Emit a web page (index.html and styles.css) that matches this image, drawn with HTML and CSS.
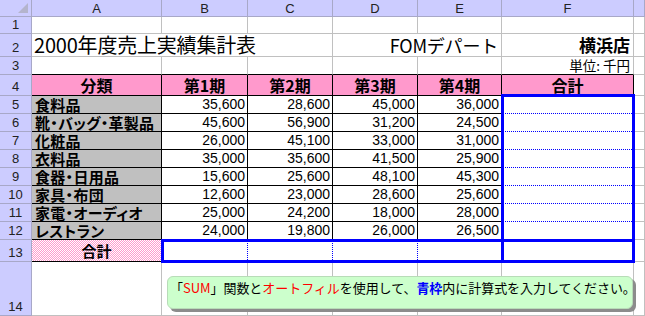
FILE: index.html
```html
<!DOCTYPE html>
<html lang="ja">
<head>
<meta charset="utf-8">
<title>2000年度売上実績集計表</title>
<link rel="stylesheet" href="styles.css">
</head>
<body>
<div class="stack">
  <div class="sheet">
    <!-- column headers -->
    <div class="c corner"><svg class="tri" width="10" height="10" viewBox="0 0 10 10"><polygon points="10,0 10,10 0,10" fill="#b4b4cc"/></svg></div>
    <div class="c ch">A</div><div class="c ch">B</div><div class="c ch">C</div><div class="c ch">D</div><div class="c ch">E</div><div class="c ch">F</div><div class="c ch"></div>

    <!-- row 1 -->
    <div class="c rh">1</div><div class="c"></div><div class="c"></div><div class="c"></div><div class="c"></div><div class="c"></div><div class="c"></div><div class="c"></div>

    <!-- row 2 -->
    <div class="c rh">2</div>
    <div class="c title span3">2000年度売上実績集計表</div>
    <div class="c store span2">FOMデパート</div>
    <div class="c branch">横浜店</div>
    <div class="c"></div>

    <!-- row 3 -->
    <div class="c rh">3</div><div class="c bb"></div><div class="c bb"></div><div class="c bb"></div><div class="c bb"></div><div class="c bb"></div><div class="c bb unit">単位: 千円</div><div class="c"></div>

    <!-- row 4 -->
    <div class="c rh">4</div>
    <div class="c tb pk hd">分類</div>
    <div class="c tb pk hd">第1期</div>
    <div class="c tb pk hd">第2期</div>
    <div class="c tb pk hd">第3期</div>
    <div class="c tb pk hd">第4期</div>
    <div class="c tb pk hd">合計</div>
    <div class="c"></div>

    <!-- row 5 -->
    <div class="c rh">5</div><div class="c tb gy cat">食料品</div><div class="c tb num">35,600</div><div class="c tb num">28,600</div><div class="c tb num">45,000</div><div class="c tb num">36,000</div><div class="c dotb"></div><div class="c"></div>
    <!-- row 6 -->
    <div class="c rh">6</div><div class="c tb gy cat">靴・バッグ・革製品</div><div class="c tb num">45,600</div><div class="c tb num">56,900</div><div class="c tb num">31,200</div><div class="c tb num">24,500</div><div class="c dotb"></div><div class="c"></div>
    <!-- row 7 -->
    <div class="c rh">7</div><div class="c tb gy cat">化粧品</div><div class="c tb num">26,000</div><div class="c tb num">45,100</div><div class="c tb num">33,000</div><div class="c tb num">31,000</div><div class="c dotb"></div><div class="c"></div>
    <!-- row 8 -->
    <div class="c rh">8</div><div class="c tb gy cat">衣料品</div><div class="c tb num">35,000</div><div class="c tb num">35,600</div><div class="c tb num">41,500</div><div class="c tb num">25,900</div><div class="c dotb"></div><div class="c"></div>
    <!-- row 9 -->
    <div class="c rh">9</div><div class="c tb gy cat">食器・日用品</div><div class="c tb num">15,600</div><div class="c tb num">25,600</div><div class="c tb num">48,100</div><div class="c tb num">45,300</div><div class="c dotb"></div><div class="c"></div>
    <!-- row 10 -->
    <div class="c rh">10</div><div class="c tb gy cat">家具・布団</div><div class="c tb num">12,600</div><div class="c tb num">23,000</div><div class="c tb num">28,600</div><div class="c tb num">25,600</div><div class="c dotb"></div><div class="c"></div>
    <!-- row 11 -->
    <div class="c rh">11</div><div class="c tb gy cat">家電・オーディオ</div><div class="c tb num">25,000</div><div class="c tb num">24,200</div><div class="c tb num">18,000</div><div class="c tb num">28,000</div><div class="c dotb"></div><div class="c"></div>
    <!-- row 12 -->
    <div class="c rh">12</div><div class="c tb gy cat">レストラン</div><div class="c tb num">24,000</div><div class="c tb num">19,800</div><div class="c tb num">26,000</div><div class="c tb num">26,500</div><div class="c"></div><div class="c"></div>

    <!-- row 13 -->
    <div class="c rh">13</div><div class="c tb pat hd2">合計</div><div class="c dotr"></div><div class="c dotr"></div><div class="c dotr"></div><div class="c"></div><div class="c"></div><div class="c"></div>

    <!-- row 14 -->
    <div class="c rh rh14">14</div><div class="c"></div><div class="c"></div><div class="c"></div><div class="c"></div><div class="c"></div><div class="c"></div><div class="c"></div>
  </div>

  <div class="overlay">
    <div class="box box-f"></div>
    <div class="box box-13"></div>
    <div class="note">「<span class="red">SUM</span>」関数と<span class="red">オートフィル</span>を使用して、<span class="blue">青枠</span>内に計算式を入力してください。</div>
  </div>
</div>
</body>
</html>
```

FILE: styles.css
```css
html, body {
  margin: 0;
  padding: 0;
  background: #ffffff;
}

body {
  width: 645px;
  height: 316px;
  overflow: hidden;
  font-family: "Noto Sans CJK JP", "Noto Sans", sans-serif;
  color: #000;
}

.stack {
  display: grid;
  width: 645px;
}

.sheet,
.overlay {
  grid-area: 1 / 1;
  display: grid;
  grid-template-columns: 32px 130px 86px 85px 85px 84px 132px 11px;
  grid-template-rows: 17px 17px 23px 18px 21px repeat(8, 18px) 22px 54px;
}

.overlay {
  pointer-events: none;
}

/* base cell */
.c {
  box-sizing: border-box;
  border-right: 1px solid #c0c0c0;
  border-bottom: 1px solid #c0c0c0;
  display: flex;
  align-items: flex-end;
  white-space: nowrap;
  min-width: 0;
  overflow: visible;
}

/* headers */
.corner {
  background: #ccccff;
  border-color: #a8a8c8;
  justify-content: flex-end;
  align-items: flex-end;
  padding: 0 3px 3px 0;
}

.ch {
  background: #ccccff;
  border-color: #a8a8c8;
  justify-content: center;
  align-items: center;
  font-family: "Liberation Sans", sans-serif;
  font-size: 13px;
  color: #222;
  padding-top: 1px;
}

.rh {
  background: #ccccff;
  border-color: #a8a8c8;
  justify-content: center;
  font-family: "Liberation Sans", sans-serif;
  font-size: 13px;
  line-height: 15px;
  color: #222;
  padding-bottom: 1px;
}

.rh14 {
  padding-bottom: 1px;
}

/* row 2 */
.span3 {
  grid-column: span 3;
}

.span2 {
  grid-column: span 2;
}

.title {
  font-size: 20px;
  line-height: 22px;
  padding-left: 2px;
  letter-spacing: -0.2px;
}

.store {
  justify-content: flex-end;
  font-size: 18px;
  line-height: 22px;
  padding-right: 3px;
  letter-spacing: -0.2px;
}

.branch {
  justify-content: flex-end;
  font-size: 17px;
  font-weight: 700;
  line-height: 22px;
  padding-right: 3px;
}

.unit {
  justify-content: flex-end;
  font-size: 13.5px;
  line-height: 17px;
  padding-right: 3px;
}

/* table borders */
.bb {
  border-bottom-color: #000;
}

.tb {
  border-right-color: #000;
  border-bottom-color: #000;
}

.pk {
  background: #ff99cc;
}

.gy {
  background: #c0c0c0;
}

.hd {
  justify-content: center;
  font-size: 16px;
  font-weight: 700;
  line-height: 20px;
}

.hd2 {
  justify-content: center;
  font-size: 15px;
  font-weight: 700;
  line-height: 20px;
}

.pat {
  background-color: #ffffff;
  background-image: repeating-conic-gradient(#ff99cc 0 25%, #ffffff 0 50%);
  background-size: 2px 2px;
}

.cat {
  font-size: 15px;
  font-weight: 700;
  line-height: 17px;
  padding-left: 3px;
  font-feature-settings: "palt";
  letter-spacing: 0.3px;
}

.num {
  justify-content: flex-end;
  font-family: "Liberation Sans", sans-serif;
  font-size: 14px;
  line-height: 16px;
  padding-right: 2px;
  padding-bottom: 1px;
}

.dotb {
  border-bottom: 1px dotted #0000ff;
}

.dotr {
  border-right: 1px dotted #0000ff;
}

/* blue frames */
.box {
  box-sizing: border-box;
  border: 3px solid #0000ff;
}

.box-f {
  grid-column: 7 / 8;
  grid-row: 6 / 15;
  margin: -2px -1px -1px -1px;
}

.box-13 {
  grid-column: 3 / 8;
  grid-row: 14 / 15;
  margin: -1px -1px -1px -1px;
}

/* note bubble */
.note {
  grid-column: 3 / 9;
  grid-row: 15 / 16;
  align-self: start;
  justify-self: start;
  box-sizing: border-box;
  width: 466px;
  height: 33px;
  margin-top: 14px;
  margin-left: 5px;
  padding: 2px 0 0 2px;
  background: #ccffcc;
  border: 1px solid #b8dcb8;
  border-radius: 6px;
  box-shadow: 3px 3px 0 #8c8c8c;
  font-size: 13px;
  line-height: 17px;
  letter-spacing: -0.05px;
  white-space: nowrap;
}

.red {
  color: #ff0000;
}

.blue {
  color: #0000ff;
  font-weight: 700;
}
```
